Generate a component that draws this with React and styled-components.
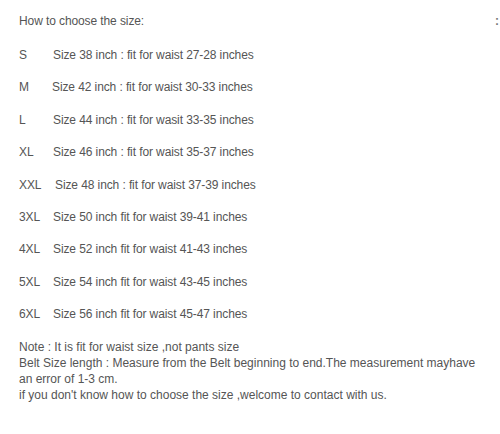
import React from "react";
import styled, { createGlobalStyle } from "styled-components";

const GlobalStyle = createGlobalStyle`
  html, body {
    margin: 0;
    padding: 0;
    background: #ffffff;
  }
  body {
    font-family: "Liberation Sans", Arial, sans-serif;
    font-size: 12px;
    letter-spacing: -0.1px;
    color: #555555;
  }
`;

const sizes = [
  { label: "S", text: "Size 38 inch : fit for waist 27-28 inches", shift: 0 },
  { label: "M", text: "Size 42 inch : fit for waist 30-33 inches", shift: -1 },
  { label: "L", text: "Size 44 inch : fit for wasit 33-35 inches", shift: 0 },
  { label: "XL", text: "Size 46 inch : fit for waist 35-37 inches", shift: 0 },
  { label: "XXL", text: "Size 48 inch : fit for waist 37-39 inches", shift: 2 },
  { label: "3XL", text: "Size 50 inch fit for waist 39-41 inches", shift: 0 },
  { label: "4XL", text: "Size 52 inch fit for waist 41-43 inches", shift: 0 },
  { label: "5XL", text: "Size 54 inch fit for waist 43-45 inches", shift: 0 },
  { label: "6XL", text: "Size 56 inch fit for waist 45-47 inches", shift: 0 },
];

export default function App() {
  return (
    <>
      <GlobalStyle />
      <Page>
        <TitleRow>
          <Title>How to choose the size:</Title>
          <EdgeMark>:</EdgeMark>
        </TitleRow>
        <SizeList>
          {sizes.map((s) => (
            <SizeRow key={s.label}>
              <SizeLabel $shift={s.shift}>{s.label}</SizeLabel>
              <SizeText>{s.text}</SizeText>
            </SizeRow>
          ))}
        </SizeList>
        <Notes>
          <p>Note : It is fit for waist size ,not pants size</p>
          <p>
            Belt Size length : Measure from the Belt beginning to end.The
            measurement mayhave an error of 1-3 cm.
          </p>
          <p>
            if you don't know how to choose the size ,welcome to contact with us.
          </p>
        </Notes>
      </Page>
    </>
  );
}

const Page = styled.div`
  width: 500px;
  height: 434px;
  box-sizing: border-box;
  padding: 13px 0 0 19px;
  overflow: hidden;
  line-height: 16px;
`;

const TitleRow = styled.div`
  display: flex;
  justify-content: space-between;
  align-items: center;
`;

const Title = styled.div``;

const EdgeMark = styled.span`
  margin-right: 1px;
  font-weight: 700;
  color: #777;
`;

const SizeList = styled.div`
  display: flex;
  flex-direction: column;
  gap: 16.4px;
  margin-top: 18px;
`;

const SizeRow = styled.div`
  display: flex;
  align-items: center;
`;

const SizeLabel = styled.span`
  width: ${(p) => 34 + p.$shift}px;
  flex-shrink: 0;
`;

const SizeText = styled.span``;

const Notes = styled.div`
  margin-top: 17px;
  width: 466px;
  letter-spacing: 0;

  p {
    margin: 0;
  }
`;
